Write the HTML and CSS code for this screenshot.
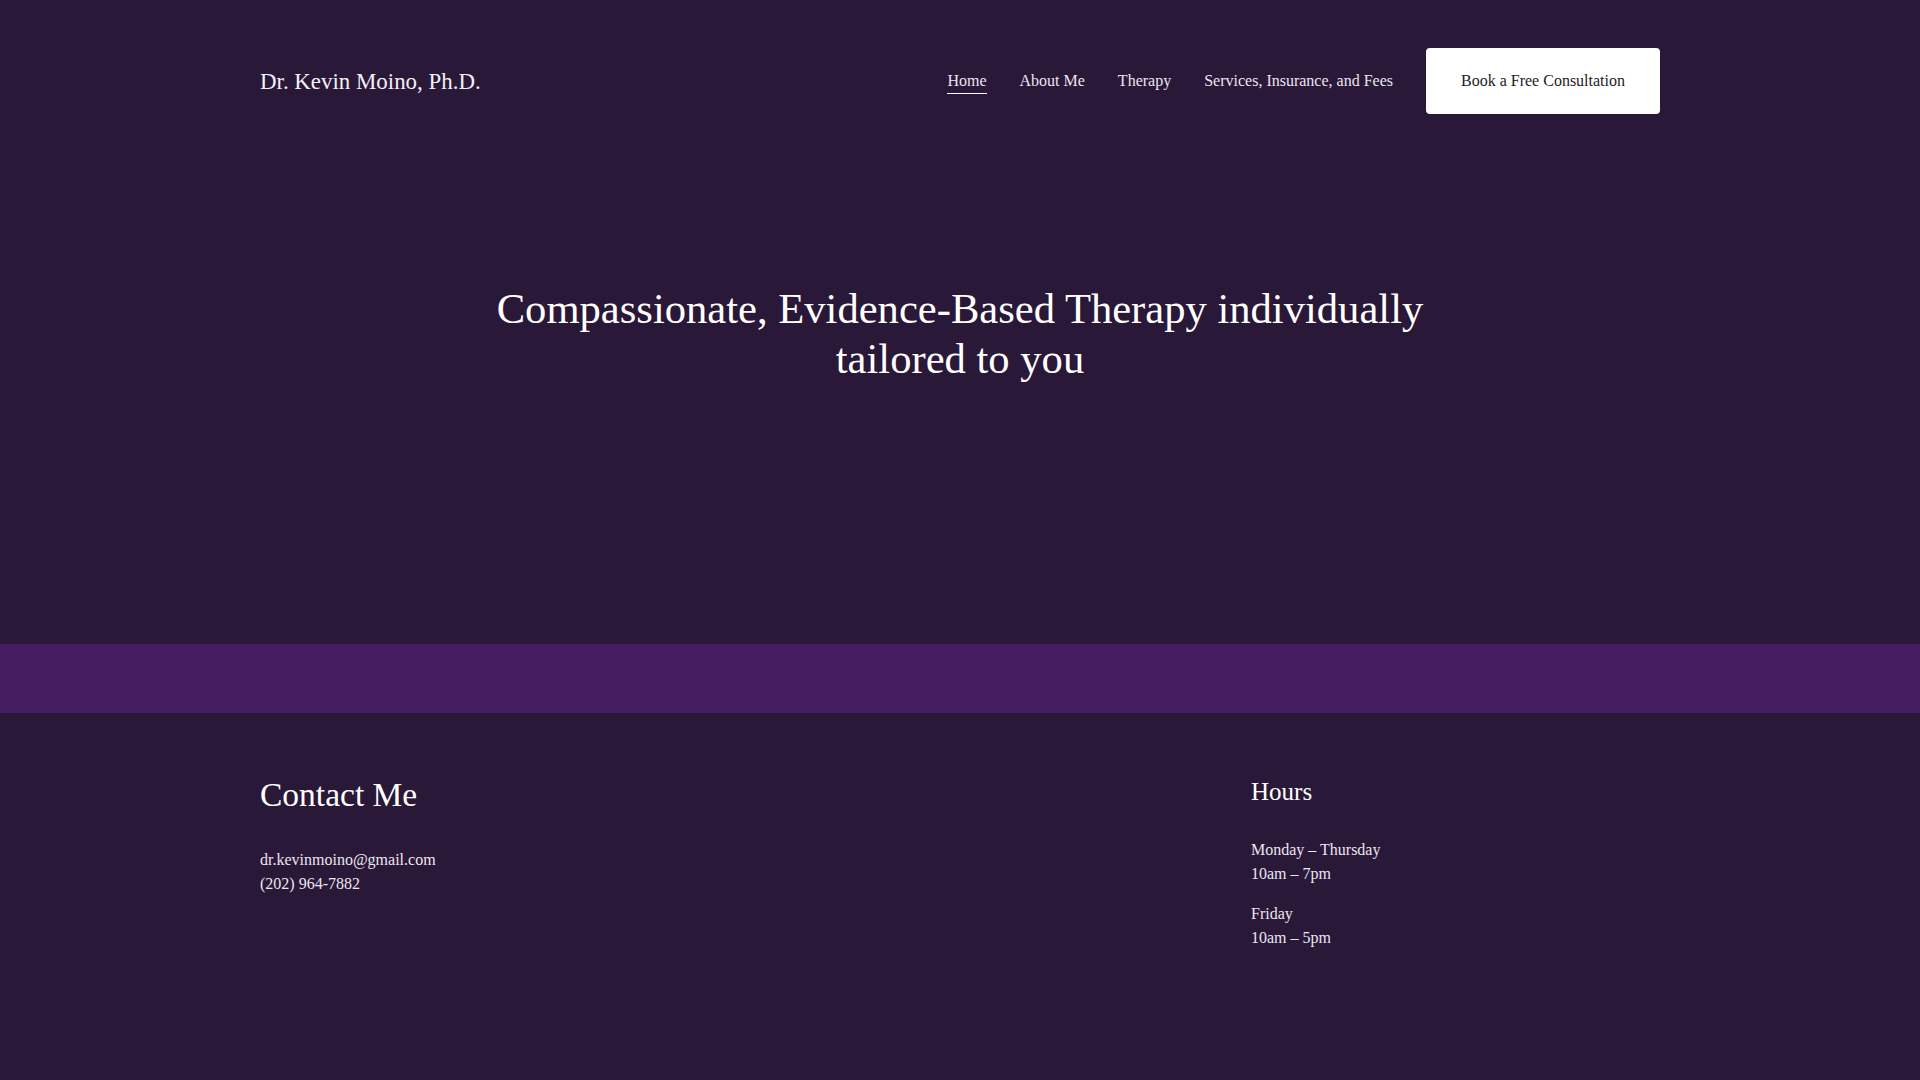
FILE: index.html
```html
<!DOCTYPE html>
<html lang="en">
<head>
<meta charset="utf-8">
<title>Dr. Kevin Moino, Ph.D.</title>
<link rel="stylesheet" href="styles.css">
</head>
<body>
<header class="site-header">
  <div class="container header-inner">
    <a class="logo" href="#">Dr. Kevin Moino, Ph.D.</a>
    <nav class="main-nav">
      <a class="nav-link active" href="#">Home</a>
      <a class="nav-link" href="#">About Me</a>
      <a class="nav-link" href="#">Therapy</a>
      <a class="nav-link" href="#">Services, Insurance, and Fees</a>
      <a class="btn-consult" href="#">Book a Free Consultation</a>
    </nav>
  </div>
</header>
<section class="hero">
  <h1 class="hero-title">Compassionate, Evidence-Based Therapy individually tailored to you</h1>
</section>
<div class="band"></div>
<footer class="site-footer">
  <div class="container footer-grid">
    <div class="contact">
      <h2 class="contact-title">Contact Me</h2>
      <p class="contact-lines">dr.kevinmoino@gmail.com<br>(202) 964-7882</p>
    </div>
    <div class="hours">
      <h3 class="hours-title">Hours</h3>
      <p class="hours-group">Monday – Thursday<br>10am – 7pm</p>
      <p class="hours-group">Friday<br>10am – 5pm</p>
    </div>
  </div>
</footer>
</body>
</html>
```
FILE: styles.css
```css
* { box-sizing: border-box; }
html, body {
  margin: 0;
  padding: 0;
  background: #291837;
  color: #ffffff;
  font-family: "Liberation Serif", "Times New Roman", serif;
}
a { color: inherit; text-decoration: none; }
.container {
  width: 1400px;
  margin: 0 auto;
}
.site-header {
  padding: 48px 0 47px;
}
.header-inner {
  display: flex;
  align-items: center;
  justify-content: space-between;
}
.logo {
  font-size: 22.9px;
  color: #f4f0f7;
  line-height: 1;
  position: relative;
  top: 1px;
}
.main-nav {
  display: flex;
  align-items: center;
  gap: 33px;
}
.nav-link {
  font-size: 16px;
  line-height: 24px;
  color: #ece6f1;
  padding-bottom: 1px;
}
.nav-link.active {
  border-bottom: 1px solid #ffffff;
  padding-bottom: 0;
  margin-left: 1px;
}
.btn-consult {
  display: block;
  background: #ffffff;
  color: #1e1a22;
  font-size: 16px;
  line-height: 20px;
  padding: 23px 35px;
  border-radius: 4px;
  width: 234px;
  height: 66px;
  text-align: center;
}
.hero {
  padding: 123px 0 260px;
  display: flex;
  justify-content: center;
}
.hero-title {
  margin: 0;
  max-width: 1000px;
  text-align: center;
  font-weight: normal;
  font-size: 42.6px;
  line-height: 50px;
  color: #ffffff;
}
.band {
  height: 69px;
  background: #451d60;
}
.site-footer {
  padding: 62px 0 0;
  min-height: 367px;
}
.footer-grid {
  display: grid;
  grid-template-columns: 991px 1fr;
}
.contact-title {
  margin: 0 0 33px;
  font-weight: normal;
  font-size: 33.5px;
  line-height: 40px;
  color: #ffffff;
}
.contact-lines {
  margin: 0;
  font-size: 16px;
  line-height: 24px;
  color: #ece6f1;
}
.hours-title {
  margin: 2px 0 31px;
  font-weight: normal;
  font-size: 25px;
  line-height: 30px;
  color: #ffffff;
}
.hours-group {
  margin: 0 0 16px;
  font-size: 16px;
  line-height: 24px;
  color: #ece6f1;
}
```
